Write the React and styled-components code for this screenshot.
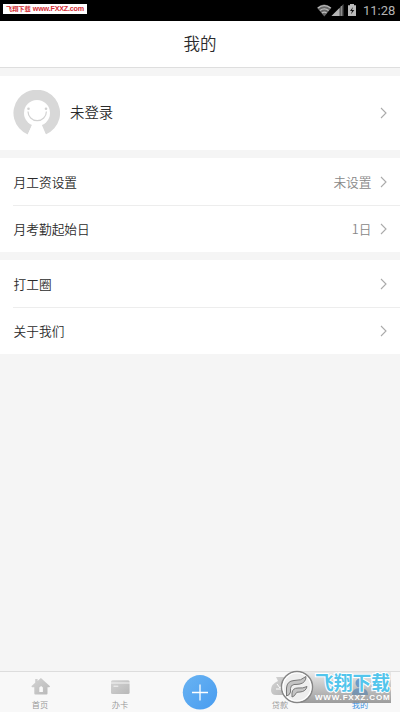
import React from "react";
import styled, { createGlobalStyle } from "styled-components";

const Global = createGlobalStyle`
  * { box-sizing: border-box; }
  body { margin: 0; background: #f5f5f5; font-family: "Noto Sans CJK SC", sans-serif; font-weight: 350; }
`;

const Screen = styled.div`
  width: 400px;
  height: 712px;
  display: flex;
  flex-direction: column;
  background: #f5f5f5;
  overflow: hidden;
`;

const StatusBar = styled.div`
  height: 21px;
  flex: none;
  background: #000;
  display: flex;
  align-items: flex-start;
  justify-content: space-between;
  padding: 4px 4px 0 3px;
`;

const SiteTag = styled.div`
  width: 84px;
  height: 10px;
  background: #fff;
  color: #d42b32;
  display: flex;
  align-items: center;
  justify-content: space-between;
  padding: 0 3px 0 3px;
  font-size: 6.2px;
  line-height: 10px;
  font-weight: 700;
  white-space: nowrap;
`;

const SiteUrl = styled.span`
  font: 700 7.2px/10px "Liberation Sans", sans-serif;
  letter-spacing: -0.2px;
`;

const SystemIcons = styled.div`
  display: flex;
  height: 13px;
`;

const Clock = styled.span`
  width: 33px;
  margin-left: 5px;
  color: #b4b4b4;
  font: 400 13px/14px Roboto, sans-serif;
  white-space: nowrap;
`;

const Header = styled.header`
  height: 47px;
  flex: none;
  background: #fff;
  border-bottom: 1px solid #dedede;
  text-align: center;
  color: #2b2b2b;
  font-size: 16.5px;
  line-height: 45px;
`;

const Group = styled.section`
  flex: none;
  margin-top: 8px;
  background: #fff;
`;

const Profile = styled.div`
  height: 74px;
  display: flex;
  align-items: center;
  padding: 0 13px;
`;

const Name = styled.span`
  flex: 1;
  margin: -2px 0 0 10px;
  color: #2b2b2b;
  font-size: 14.4px;
  line-height: 22px;
`;

const Row = styled.div`
  height: 47px;
  margin-left: 13px;
  padding-right: 13px;
  display: flex;
  align-items: center;
  color: #2b2b2b;
  font-size: 12.7px;
  line-height: 20px;
  & + & { border-top: 1px solid #ededed; }
`;

const Label = styled.span`
  flex: 1;
  padding-left: 0.6px;
`;

const Value = styled.span`
  color: #888;
  margin-right: 8.5px;
`;

const Chevron = styled.svg`
  width: 7px;
  height: 12px;
  flex: none;
`;

const TabBar = styled.nav`
  position: relative;
  height: 41px;
  flex: none;
  margin-top: auto;
  display: grid;
  grid-template-columns: repeat(5, 1fr);
  background: #f8f8f8;
  border-top: 1px solid #dddddd;
`;

const Tab = styled.div`
  display: flex;
  flex-direction: column;
  align-items: center;
  padding-top: ${(p) => (p.$main ? "3px" : "5px")};
  color: ${(p) => (p.$active ? "#2f89e0" : "#959595")};
  font-size: 8.2px;
  line-height: 12px;
  svg { display: block; flex: none; }
`;

const TabText = styled.span`
  margin-top: 1px;
`;

const Watermark = styled.div`
  position: absolute;
  left: 280px;
  top: -3px;
  width: 112px;
  height: 36px;
`;

const WatermarkBand = styled.div`
  position: absolute;
  left: 16px;
  top: 3px;
  width: 95px;
  height: 31px;
  padding-left: 19px;
  background: linear-gradient(rgba(190, 190, 190, 0.25), rgba(140, 140, 140, 0.85));
`;

const WatermarkName = styled.div`
  height: 22px;
  color: #52c5ec;
  font-size: 18.8px;
  line-height: 20px;
  font-weight: 700;
  white-space: nowrap;
  -webkit-text-stroke: 2px #fff;
  paint-order: stroke fill;
`;

const WatermarkUrl = styled.div`
  color: #fff;
  font: 700 8px/8px "Liberation Sans", sans-serif;
  letter-spacing: 0.8px;
  white-space: nowrap;
`;

const WatermarkLogo = styled.svg`
  position: absolute;
  left: 0;
  top: 1px;
`;

const Arrow = () => (
  <Chevron viewBox="0 0 7 12">
    <path d="M1 1 6 6 1 11" fill="none" stroke="#aaa" strokeWidth="1.1" />
  </Chevron>
);

const SystemStatus = () => (
  <svg width="41" height="13" viewBox="0 0 41 13">
    <path d="M0 3.7Q7-2.5 14.5 3.7L7.3 12.5Z" fill="#666" />
    <path d="M1 4Q7.3-.8 13.6 4M3 6.5q4.3-3.2 8.6 0M5 9q2.3-1.7 4.6 0" fill="none" stroke="#bdbdbd" strokeWidth="1.4" />
    <path d="M26.5 0v12H14.5Z" fill="#555" />
    <path d="M22.5 4v8h-8Z" fill="#b5b5b5" />
    <path d="M24.3 2v10" stroke="#999" />
    <path d="M31 1.2h2V0h4v1.2h2V12h-8Z" fill="#bcbcbc" />
    <path d="m36 3-3 4h2l-1 3.3L37.3 6H35Z" fill="#111" />
  </svg>
);

const Avatar = () => (
  <svg width="47" height="47" viewBox="0 0 47 47">
    <path d="M14.8 44.5A23.3 23.3 0 1 1 32.7 44.5L28 35H19Z" fill="#d8d8d8" />
    <circle cx="24" cy="23" r="13" fill="#fff" />
    <path d="M19.5 34h9l4.6 11H14.5Z" fill="#fff" />
    <path d="M15 21.5a9.2 9.2 0 0 0 18.4 0" fill="none" stroke="#d2d2d2" strokeWidth="1.2" />
    <circle cx="15.5" cy="18.8" r="1.3" fill="#d0d0d0" />
    <circle cx="33" cy="18.8" r="1.3" fill="#d0d0d0" />
  </svg>
);

const grayFill = (
  <defs>
    <linearGradient id="gray" x1="0" y1="0" x2="1" y2="1">
      <stop stopColor="#d4d4d4" />
      <stop offset="1" stopColor="#b8b8b8" />
    </linearGradient>
  </defs>
);

const HomeIcon = () => (
  <svg width="20" height="20" viewBox="0 0 20 20">
    {grayFill}
    <path d="m10.9 1 9.2 8.3-.9 1h-1.7v6.2q0 1-1 1H5.3q-1 0-1-1v-6.2H2.2l-.9-1L5.2 5.8V2h2.4v1.9Z" fill="url(#gray)" />
    <path d="M9.3 15v-4.5l1.8-1.4 1.8 1.4V15Z" fill="#fafafa" />
  </svg>
);

const CardIcon = () => (
  <svg width="20" height="20" viewBox="0 0 20 20">
    <rect x="1" y="3.2" width="18.6" height="13.8" rx="1.5" fill="url(#gray)" />
    <path d="M1 6h19M3.5 9.2h4.8" stroke="#f5f5f5" strokeWidth="1" />
  </svg>
);

const MoneyIcon = () => (
  <svg width="20" height="20" viewBox="0 0 20 20">
    <path d="M6 0h8l-2 4q7 3 7 9 0 5-5 5H6q-5 0-5-5 0-6 7-9Z" fill="url(#gray)" />
    <path d="m7 7 3 4 3-4M6 12h8" stroke="#fff" fill="none" />
  </svg>
);

const PersonIcon = () => (
  <svg width="20" height="20" viewBox="0 0 20 20">
    <circle cx="10" cy="6" r="4.5" fill="#4598e8" />
    <path d="M2 18q0-7 8-7t8 7Z" fill="#4598e8" />
  </svg>
);

const AddIcon = () => (
  <svg width="36" height="35" viewBox="0 0 36 35">
    <defs>
      <linearGradient id="blue" x1="0" y1="0" x2="1" y2="1">
        <stop stopColor="#69b3f2" />
        <stop offset="1" stopColor="#489cf0" />
      </linearGradient>
    </defs>
    <circle cx="18" cy="17.3" r="17.2" fill="url(#blue)" />
    <path d="M18 9.5v16M10 17.5h16" stroke="#fff" strokeWidth="1.3" />
  </svg>
);

const MarkLogo = () => (
  <WatermarkLogo width="34" height="34" viewBox="0 0 34 34">
    <circle cx="17" cy="17" r="15.5" fill="#eee" stroke="#858585" strokeWidth="1.5" />
    <circle cx="17" cy="17" r="14" fill="none" stroke="#fff" strokeWidth="1.2" />
    <path d="M6.5 26V18Q7 11 14 10.5q7 .5 12-4 0 6-6 7.5-3 .5-6 .5-3.500.5-3.500 4V22Q10 25 6.500 26Z" fill="#c4c4c4" stroke="#777" strokeWidth="1" />
    <path d="M12 27v-4q.5-5 6-5 5 .5 9-1.500-1 5-7 5.500-4-.5-4.500 2Q15 26 12 27Z" fill="#c4c4c4" stroke="#777" strokeWidth="1" />
  </WatermarkLogo>
);

export default function App() {
  return (
    <>
      <Global />
      <Screen>
        <StatusBar>
          <SiteTag><span>飞翔下载</span><SiteUrl>www.FXXZ.com</SiteUrl></SiteTag>
          <SystemIcons><SystemStatus /><Clock>11:28</Clock></SystemIcons>
        </StatusBar>
        <Header>我的</Header>
        <Group>
          <Profile><Avatar /><Name>未登录</Name><Arrow /></Profile>
        </Group>
        <Group>
          <Row><Label>月工资设置</Label><Value>未设置</Value><Arrow /></Row>
          <Row><Label>月考勤起始日</Label><Value>1日</Value><Arrow /></Row>
        </Group>
        <Group>
          <Row><Label>打工圈</Label><Arrow /></Row>
          <Row><Label>关于我们</Label><Arrow /></Row>
        </Group>
        <TabBar>
          <Tab><HomeIcon /><TabText>首页</TabText></Tab>
          <Tab><CardIcon /><TabText>办卡</TabText></Tab>
          <Tab $main><AddIcon /></Tab>
          <Tab><MoneyIcon /><TabText>贷款</TabText></Tab>
          <Tab $active><PersonIcon /><TabText>我的</TabText></Tab>
          <Watermark>
            <WatermarkBand>
              <WatermarkName>飞翔下载</WatermarkName>
              <WatermarkUrl>WWW.FXXZ.COM</WatermarkUrl>
            </WatermarkBand>
            <MarkLogo />
          </Watermark>
        </TabBar>
      </Screen>
    </>
  );
}
